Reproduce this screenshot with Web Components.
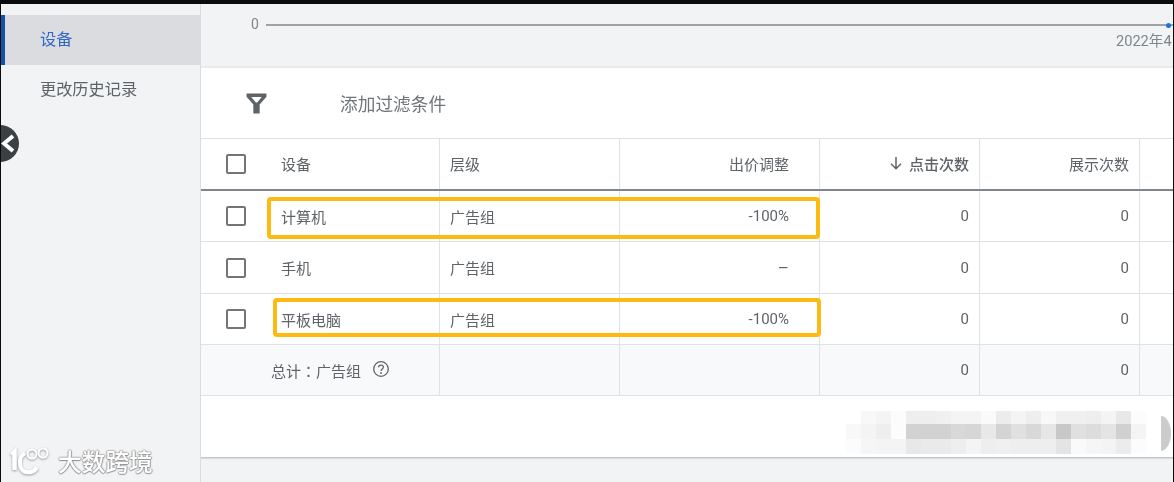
<!DOCTYPE html>
<html>
<head>
<meta charset="utf-8">
<style>
  html, body { margin: 0; height: 100%; background: #0b0b0b; overflow: hidden; }
  body { font-family: Roboto, "Noto Sans CJK SC", sans-serif; color: #5f6368; }
  ads-page { width: 1174px; height: 482px; }
</style>
</head>
<body>
<ads-page>
  <ads-sidebar slot="side">
    <side-item active>设备</side-item>
    <side-item>更改历史记录</side-item>
  </ads-sidebar>
  <chart-strip slot="main"></chart-strip>
  <filter-bar slot="main">添加过滤条件</filter-bar>
  <device-table slot="main"></device-table>
</ads-page>

<script>
class AdsPage extends HTMLElement {
  constructor() {
    super();
    this.attachShadow({ mode: "open" });
    this.shadowRoot.innerHTML = `
    <style>
      :host { display: block; position: relative; box-sizing: border-box; padding: 4px 1px 0; overflow: hidden; }
      .wrap { display: flex; height: 100%; background: #f1f3f4; overflow: hidden; filter: blur(0.35px); }
      .main { flex: 1; min-width: 0; display: flex; flex-direction: column; }
    </style>
    <div class="wrap">
      <slot name="side"></slot>
      <div class="main"><slot name="main"></slot></div>
    </div>
    `;
  }
}

class AdsSidebar extends HTMLElement {
  constructor() {
    super();
    this.attachShadow({ mode: "open" });
    this.shadowRoot.innerHTML = `
    <style>
      :host { display: block; position: relative; box-sizing: border-box; width: 200px; padding-top: 11px; background: #f1f3f4; border-right: 1px solid #dadce0; }
      .back { position: absolute; left: -19px; top: 121px; width: 37px; height: 37px; border-radius: 50%; background: #3c4043; }
      .back svg { position: absolute; left: 19px; top: 8px; }
      .mark { position: absolute; left: 9px; top: 442px; display: flex; align-items: center; gap: 6px; color: #fff; font-size: 23.7px; font-weight: 500; font-family: "Noto Sans CJK SC", sans-serif; line-height: 30px; text-shadow: 0 1px 1px #8f8f8f, 1px 0 1px #a0a0a0, -1px 0 1px #b0b0b0, 0 -1px 1px #c0c0c0; }
    </style>
    <slot></slot>
    <div class="back">
      <svg width="16" height="21" viewBox="0 0 16 21"><path d="M12 3 L3 10.5 L12 18" fill="none" stroke="#fff" stroke-width="4"/></svg>
    </div>
    <div class="mark">
      <svg width="42" height="30" viewBox="0 0 42 30" style="filter:drop-shadow(0 1px 1px #999)">
        <path d="M1.5 9 L4.5 6 V24" fill="none" stroke="#fff" stroke-width="4.5"/>
        <path d="M15 7 C8 11 8 24 16 26 C21 27 25 25 27 21" fill="none" stroke="#fff" stroke-width="4"/>
        <circle cx="22" cy="8" r="4.5" fill="none" stroke="#fff" stroke-width="2"/>
        <circle cx="33" cy="7" r="4.5" fill="none" stroke="#fff" stroke-width="2"/>
      </svg>
      <span>大数跨境</span>
    </div>
    `;
  }
}

class SideItem extends HTMLElement {
  constructor() {
    super();
    this.attachShadow({ mode: "open" });
    this.shadowRoot.innerHTML = `
    <style>
      :host { display: flex; align-items: center; height: 50px; padding: 0 0 4px 39px; font-size: 16.2px; color: #5f6368; box-sizing: border-box; }
      :host([active]) { background: #dadce0; color: #3367c4; border-left: 4px solid #174ea6; padding-left: 35px; }
    </style>
    <slot></slot>
    `;
  }
}

class ChartStrip extends HTMLElement {
  constructor() {
    super();
    this.attachShadow({ mode: "open" });
    this.shadowRoot.innerHTML = `
    <style>
      :host { display: block; box-sizing: border-box; height: 64px; padding: 12px 0 0 50px; background: #f1f3f4; border-bottom: 2px solid #e8eaed; font-size: 14px; color: #80868b; overflow: hidden; }
      .axis { display: flex; align-items: center; gap: 7px; height: 16px; }
      .line { position: relative; flex: 1; height: 2px; margin-top: 1px; background: #a0a3a6; }
      .dot { position: absolute; right: 2px; top: -1px; width: 5px; height: 5px; border-radius: 50%; background: #1a73e8; }
      .date { height: 16px; margin-top: -3px; padding-left: 865px; white-space: nowrap; font-size: 14.6px; }
    </style>
    <div class="axis"><span>0</span><div class="line"><div class="dot"></div></div></div>
    <div class="date">2022年4</div>
    `;
  }
}

class FilterBar extends HTMLElement {
  constructor() {
    super();
    this.attachShadow({ mode: "open" });
    this.shadowRoot.innerHTML = `
    <style>
      :host { display: flex; align-items: center; box-sizing: border-box; height: 71px; padding-left: 45px; background: #fff; border-bottom: 1px solid #e0e0e0; font-size: 17.7px; color: #70757a; }
      svg { display: block; margin-right: 73px; }
      slot { display: block; }
    </style>
    <svg width="21" height="21" viewBox="0 0 20 20"><path d="M0.5 0.5 H19.5 V3.5 L13 11 V19.5 H7 V11 L0.5 3.5 Z M5 3.8 L9.4 9 H10.6 L15 3.8 Z" fill="#5f6368" fill-rule="evenodd"/></svg>
    <slot></slot>
    `;
  }
}

const COLUMNS = "239px 180px 200px 160px 160px 1fr";

class TableRow extends HTMLElement {
  constructor() {
    super();
    this.attachShadow({ mode: "open" });
    const h = this.getAttribute("h") || 51;
    this.shadowRoot.innerHTML = `
    <style>
      :host { display: grid; grid-template-columns: ${COLUMNS}; height: ${h}px; box-sizing: border-box; border-bottom: 1px solid #e0e2e5; font-size: 15px; color: #5f6368; background: #fff; }
      :host([total]) { background: #f8f9fa; }
      :host([head]) { border-bottom: 2px solid #80868b; }
    </style>
    <slot></slot>
    `;
  }
}

class TableCell extends HTMLElement {
  constructor() {
    super();
    this.attachShadow({ mode: "open" });
    this.shadowRoot.innerHTML = `
    <style>
      :host { display: flex; align-items: center; box-sizing: border-box; padding: 0 10px; border-right: 1px solid #e0e2e5; white-space: nowrap; }
      :host([num]) { justify-content: flex-end; }
      :host([pad]) { padding-right: 30px; }
      :host([first]) { padding: 0 0 0 25px; }
      :host([last]) { border-right: 0; }
      :host([bold]) { font-weight: 500; color: #5f6368; }
      slot { display: flex; align-items: center; }
      :host([up]) slot { margin-top: -2px; }
      .box { width: 20px; height: 20px; box-sizing: border-box; border: 2px solid #757575; border-radius: 2px; margin-right: 35px; background: #fff; }
    </style>
    <div class="box" part="box"></div><slot></slot>
    `;
    if (!this.hasAttribute("first")) this.shadowRoot.querySelector(".box").remove();
  }
}

class DeviceTable extends HTMLElement {
  constructor() {
    super();
    this.attachShadow({ mode: "open" });
    const row = (name, bid, h) => `
      <table-row h="${h}">
        <table-cell first>${name}</table-cell>
        <table-cell>广告组</table-cell>
        <table-cell num pad>${bid}</table-cell>
        <table-cell num>0</table-cell>
        <table-cell num>0</table-cell>
        <table-cell last></table-cell>
      </table-row>`;
    // pixelated smear over the footer text, one line of greys per tile row
    const tiles = [
      "ffffff f8f8f8 f4f4f4 fcfcfc eeeeee eeeeee f0f0f0 f4f4f4 f4f4f4 fafafa ececec f4f4f4 eeeeee f8f8f8 f0f0f0 f0f0f0 eeeeee f4f4f4 e8e8e8 fcfcfc",
      "f8f8f8 f4f4f4 eeeeee fcfcfc d2d2d2 d2d2d2 d2d2d2 d8d8d8 d6d6d6 e8e8e8 d4d4d4 e0e0e0 d8d8d8 e6e6e6 c8c8c8 e0e0e0 dcdcdc e4e4e4 d0d0d0 f4f4f4",
      "fcfcfc f6f6f6 f4f4f4 f4f4f4 e8e8e8 eaeaea eaeaea eeeeee f4f4f4 eeeeee f0f0f0 eeeeee eeeeee eeeeee e4e4e4 fafafa f6f6f6 f4f4f4 ececec fcfcfc"
    ];
    let blocks = "";
    tiles.forEach((line) => {
      line.split(" ").forEach((c) => {
        blocks += `<i style="background:#${c}"></i>`;
      });
    });
    this.shadowRoot.innerHTML = `
    <style>
      :host { display: block; position: relative; flex: 1; background: #f1f3f4; }
      .foot { height: 61px; background: #fff; border-bottom: 1px solid #c4c7c9; box-shadow: 0 1px 1px #dcdcdc; position: relative; }
      .mark { position: absolute; border: 4px solid #fdbb12; border-radius: 4px; box-sizing: border-box; }
      .tiles { position: absolute; left: 645px; top: 15px; display: grid; grid-template-columns: repeat(20, 15px); grid-template-rows: 13px 15px 15px; }
      .tiles i { display: block; }
      .half { position: absolute; left: 960px; top: 20px; width: 10px; height: 35px; background: #cbcbcb; border-radius: 0 100% 100% 0 / 0 50% 50% 0; }
      .arrow { margin-right: 6px; }
      .help { margin: -3px 0 0 11px; }
      .sum { margin-left: 60px; font-family: Roboto, "Noto Sans CJK TC", sans-serif; }
      .dash { font-size: 17px; }
    </style>
    <table-row head h="52">
      <table-cell first up>设备</table-cell>
      <table-cell up>层级</table-cell>
      <table-cell num pad up>出价调整</table-cell>
      <table-cell num bold up>
        <svg class="arrow" width="14" height="14" viewBox="0 0 14 14"><path d="M7 1 V12.5 M2 7.8 L7 12.8 L12 7.8" fill="none" stroke="#5f6368" stroke-width="1.5"/></svg>点击次数
      </table-cell>
      <table-cell num up>展示次数</table-cell>
      <table-cell last></table-cell>
    </table-row>
    ${row("计算机", "-100%", 51)}
    ${row("手机", '<span class="dash">–</span>', 52)}
    ${row("平板电脑", "-100%", 51)}
    <table-row total h="51">
      <table-cell><span class="sum">总计：广告组</span>
        <svg class="help" width="18" height="18" viewBox="0 0 18 18"><circle cx="9" cy="9" r="7.3" fill="none" stroke="#5f6368" stroke-width="1.3"/><path d="M6.6 7.2 C6.6 4.4 11.4 4.4 11.4 7.1 C11.4 9 9 9 9 11" fill="none" stroke="#5f6368" stroke-width="1.3"/><circle cx="9" cy="13" r=".9" fill="#5f6368"/></svg>
      </table-cell>
      <table-cell></table-cell>
      <table-cell></table-cell>
      <table-cell num>0</table-cell>
      <table-cell num>0</table-cell>
      <table-cell last></table-cell>
    </table-row>
    <div class="foot">
      <div class="tiles">${blocks}</div>
      <div class="half"></div>
    </div>
    <div class="mark" style="left:66px;top:58px;width:553px;height:42px"></div>
    <div class="mark" style="left:72px;top:159px;width:548px;height:39px"></div>
    `;
  }
}

customElements.define("ads-page", AdsPage);
customElements.define("ads-sidebar", AdsSidebar);
customElements.define("side-item", SideItem);
customElements.define("chart-strip", ChartStrip);
customElements.define("filter-bar", FilterBar);
customElements.define("table-row", TableRow);
customElements.define("table-cell", TableCell);
customElements.define("device-table", DeviceTable);
</script>
</body>
</html>
